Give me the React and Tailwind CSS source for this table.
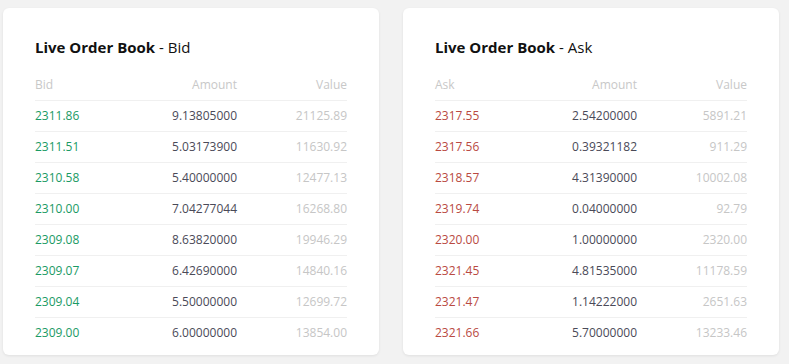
import React from "react";

const bids = [
  ["2311.86", "9.13805000", "21125.89"],
  ["2311.51", "5.03173900", "11630.92"],
  ["2310.58", "5.40000000", "12477.13"],
  ["2310.00", "7.04277044", "16268.80"],
  ["2309.08", "8.63820000", "19946.29"],
  ["2309.07", "6.42690000", "14840.16"],
  ["2309.04", "5.50000000", "12699.72"],
  ["2309.00", "6.00000000", "13854.00"],
];

const asks = [
  ["2317.55", "2.54200000", "5891.21"],
  ["2317.56", "0.39321182", "911.29"],
  ["2318.57", "4.31390000", "10002.08"],
  ["2319.74", "0.04000000", "92.79"],
  ["2320.00", "1.00000000", "2320.00"],
  ["2321.45", "4.81535000", "11178.59"],
  ["2321.47", "1.14222000", "2651.63"],
  ["2321.66", "5.70000000", "13233.46"],
];

function Book({ side, rows, priceClass }) {
  return (
    <div className="w-[376px] h-[347px] bg-white rounded-[6px] shadow-[0_1px_3px_rgba(0,0,0,0.08)] px-8 pt-[28px]">
      <div className="text-[15px] leading-[22px] text-[#111]">
        <span className="font-bold">Live Order Book</span> - {side}
      </div>
      <div className="mt-[12px] text-[12px]">
        <div className="grid grid-cols-[1fr_110px_110px] h-[30px] items-center text-[#c8c8c8]">
          <div>{side}</div>
          <div className="text-right">Amount</div>
          <div className="text-right">Value</div>
        </div>
        {rows.map((r, i) => (
          <div
            key={i}
            className="grid grid-cols-[1fr_110px_110px] h-[31px] items-center border-t border-[#f0f0f0]"
          >
            <div className={priceClass}>{r[0]}</div>
            <div className="text-right text-[#4a4a58]">{r[1]}</div>
            <div className="text-right text-[#c6c6c6]">{r[2]}</div>
          </div>
        ))}
      </div>
    </div>
  );
}

export default function App() {
  return (
    <div
      className="w-[789px] h-[364px] bg-[#f2f2f2] pl-[3px] pt-[8px] flex gap-6"
      style={{ fontFamily: '"Open Sans", sans-serif' }}
    >
      <Book side="Bid" rows={bids} priceClass="text-[#1a9a64]" />
      <Book side="Ask" rows={asks} priceClass="text-[#b94a42]" />
    </div>
  );
}
